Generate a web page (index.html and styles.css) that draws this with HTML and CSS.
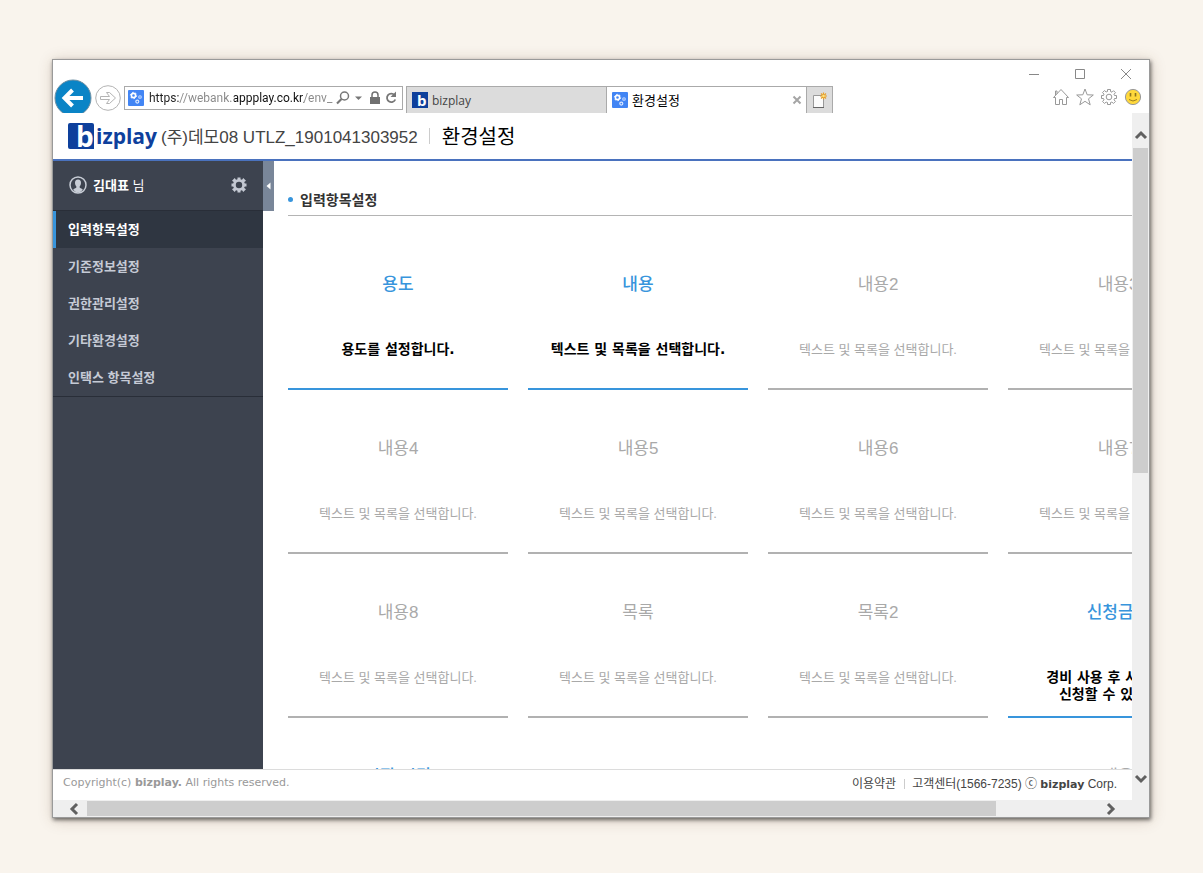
FILE: index.html
```html
<!DOCTYPE html>
<html lang="ko">
<head>
  <meta charset="UTF-8">
  <title>환경설정</title>
  <link rel="stylesheet" href="styles.css">
</head>
<body>

<svg class="defs" width="0" height="0">
  <symbol id="gears" viewBox="0 0 16 16">
    <rect width="16" height="16" rx="1" fill="#4285f4"/>
    <circle cx="5.5" cy="5.5" r="2.1" fill="none" stroke="#fff" stroke-width="1.6"/>
    <circle cx="5.5" cy="5.5" r="3.2" fill="none" stroke="#fff" stroke-width="1" stroke-dasharray="1.4 1.95"/>
    <circle cx="12" cy="7" r="1.3" fill="none" stroke="#c4daff" stroke-width="1.1"/>
    <circle cx="9.3" cy="11.6" r="1.5" fill="none" stroke="#dbe8ff" stroke-width="1.2"/>
  </symbol>
</svg>

<div class="window">

  <div class="chrome">
    <div class="nav">
      <button class="back" aria-label="뒤로">
        <svg width="38" height="38" viewBox="0 0 38 38">
          <circle cx="19" cy="19" r="18" fill="#0a84c6" stroke="#6d8fa3"/>
          <path d="M29 19H11M18.500 11L10.500 19L18.500 27" fill="none" stroke="#fff" stroke-width="4"/>
        </svg>
      </button>
      <button class="forward" aria-label="앞으로">
        <svg width="26" height="26" viewBox="0 0 26 26" fill="none" stroke="#b4b4b4">
          <circle cx="13" cy="13" r="12.300"/>
          <path d="M5.500 11.500H14.500L11.500 7.500H14.500L20.500 13L14.500 18.500H11.500L14.500 14.500H5.500Z"/>
        </svg>
      </button>
      <div class="address">
        <svg width="16" height="16"><use href="#gears"/></svg>
        <input type="text" value="https://webank.appplay.co.kr/env_" aria-label="주소">
        <svg width="66" height="16" viewBox="0 0 66 16">
          <circle cx="8.500" cy="6" r="4" fill="none" stroke="#777" stroke-width="1.500"/>
          <path d="M5.500 9L1 13.500" stroke="#777" stroke-width="2.200"/>
          <path d="M19 6.500H26L22.500 10Z" fill="#777"/>
          <path d="M34 7H44V14H34Z" fill="#707070"/>
          <path d="M36 7.500V5A3 3 0 0 1 42 5V7.500" fill="none" stroke="#707070" stroke-width="1.500"/>
          <path d="M58.500 5A4.300 4.300 0 1 0 59.300 9.500" fill="none" stroke="#777" stroke-width="1.800"/>
          <path d="M60 1.500V7H54.500Z" fill="#777"/>
        </svg>
      </div>
      <div class="tabs">
        <button class="tab">
          <svg width="16" height="16" viewBox="0 0 16 16">
            <rect width="16" height="16" fill="#0e409c"/>
            <text x="5" y="14" class="tab-b">b</text>
          </svg>
          <span>bizplay</span>
        </button>
        <button class="tab current">
          <svg width="16" height="16"><use href="#gears"/></svg>
          <span>환경설정</span>
          <svg class="tab-close" width="8" height="8" viewBox="0 0 8 8"><path d="M0.500 0.500L7.500 7.500M7.500 0.500L0.500 7.500" stroke="#a5a5a5" stroke-width="2"/></svg>
        </button>
        <button class="new-tab" aria-label="새 탭">
          <svg width="16" height="18" viewBox="0 0 16 18">
            <path d="M1.500 4.500H11.500V16.500H1.500Z" fill="#fbfbfb" stroke="#999"/>
            <path d="M1 16.500H12" stroke="#666"/>
            <path d="M11.500 1.500V8.500M8 5H15M9 2.500L14 7.500M14 2.500L9 7.500" stroke="#e8a02a" stroke-width="1.200"/>
            <circle cx="11.500" cy="5" r="1.300" fill="#ffe27a"/>
          </svg>
        </button>
      </div>
    </div>

    <div class="chrome-right">
      <div class="window-buttons">
        <button aria-label="최소화"><svg width="12" height="12" viewBox="0 0 12 12"><path d="M1 6.500H11" stroke="#888"/></svg></button>
        <button aria-label="최대화"><svg width="12" height="12" viewBox="0 0 12 12"><path d="M1.500 1.500H10.500V10.500H1.500Z" fill="none" stroke="#888"/></svg></button>
        <button aria-label="닫기"><svg width="12" height="12" viewBox="0 0 12 12"><path d="M1 1L11 11M11 1L1 11" stroke="#888"/></svg></button>
      </div>
      <div class="tools">
        <button aria-label="홈"><svg width="18" height="18" viewBox="0 0 18 18"><path d="M1.500 9.500L9 1.500L16.500 9.500H14.500V16.500H10.500V11.500H7.500V16.500H3.500V9.500ZM3.500 7.400V3H5V5.800" fill="none" stroke="#999"/></svg></button>
        <button aria-label="즐겨찾기"><svg width="18" height="18" viewBox="0 0 18 18"><path d="M9 1L11.200 6.800L17.300 7L12.500 10.800L14.200 16.800L9 13.300L3.800 16.800L5.500 10.800L0.700 7L6.800 6.800Z" fill="none" stroke="#999"/></svg></button>
        <button aria-label="도구"><svg width="18" height="18" viewBox="0 0 18 18" fill="none" stroke="#999"><circle cx="9" cy="9" r="2.800"/><path d="M7.500 1.500H10.500V3.500L12 4.200L13.500 2.700L15.500 4.700L14 6.200L14.500 7.500H16.500V10.500H14.500L14 11.900L15.500 13.400L13.400 15.500L11.900 14L10.500 14.500V16.500H7.500V14.500L6.100 14L4.600 15.500L2.500 13.400L4 11.900L3.500 10.500H1.500V7.500H3.500L4 6.100L2.500 4.600L4.600 2.500L6.100 4L7.500 3.500Z"/></svg></button>
        <button aria-label="의견 보내기"><svg width="18" height="18" viewBox="0 0 18 18"><circle cx="9" cy="9" r="7.600" fill="#ffd83b" stroke="#999"/><path d="M6.500 5V8.500M11.500 5V8.500" stroke="#8c7420" stroke-width="1.600"/><path d="M5 11.500Q9 14.500 13 11.500" fill="none" stroke="#9b7d1c"/></svg></button>
      </div>
    </div>
  </div>

  <div class="view">
    <div class="page">
      <header>
        <a class="logo" href="#" aria-label="bizplay">
          <svg width="28" height="28" viewBox="0 0 28 28">
            <path d="M2 1H24Q26 1 26 3V27H2Q0 27 0 25V3Q0 1 2 1Z" fill="#0e409c"/>
            <text x="8" y="25" class="logo-b">b</text>
            <path d="M14.500 14L20 17.500L14.500 21Z" fill="#0e409c"/>
          </svg>
          <span>izplay</span>
        </a>
        <span class="company">(주)데모08 UTLZ_1901041303952</span>
        <h1>환경설정</h1>
      </header>

      <div class="body">
        <aside>
          <div class="user">
            <svg width="18" height="18" viewBox="0 0 18 18">
              <circle cx="9" cy="9" r="8" fill="none" stroke="#c8cdd6" stroke-width="1.500"/>
              <path d="M9 3.500C11.200 3.500 12 5 12 6.800C12 8.500 11.300 9.600 10.700 10.300V11.700L13.800 13.300Q12 16.500 9 16.500Q6 16.500 4.200 13.300L7.300 11.700V10.300C6.700 9.600 6 8.500 6 6.800C6 5 6.800 3.500 9 3.500Z" fill="#c8cdd6"/>
            </svg>
            <p><b>김대표</b> 님</p>
            <button class="settings" aria-label="설정">
              <svg width="16" height="16" viewBox="0 0 16 16">
                <circle cx="8" cy="8" r="4.600" fill="none" stroke="#c3c8d2" stroke-width="2.800"/>
                <path d="M6.500 0.500H9.500V3H6.500ZM6.500 13H9.500V15.500H6.500ZM0.500 6.500H3V9.500H0.500ZM13 6.500H15.500V9.500H13ZM1 3.700L3.700 1L5.500 3.400L3.400 5.500ZM12.300 1L15 3.700L12.600 5.500L10.500 3.400ZM1 12.300L3.400 10.500L5.500 12.600L3.700 15ZM12.600 10.500L15 12.300L12.300 15L10.500 12.600Z" fill="#c3c8d2"/>
              </svg>
            </button>
          </div>
          <nav class="menu">
            <a class="active" href="#">입력항목설정</a>
            <a href="#">기준정보설정</a>
            <a href="#">권한관리설정</a>
            <a href="#">기타환경설정</a>
            <a href="#">인택스 항목설정</a>
          </nav>
        </aside>
        <button class="fold" aria-label="메뉴 접기">
          <svg width="5" height="8" viewBox="0 0 5 8"><path d="M4.500 0.500V7.500L0.500 4Z" fill="#fff"/></svg>
        </button>

        <main>
          <h2>입력항목설정</h2>
          <div class="cards">
            <section class="card on"><h3>용도</h3><p>용도를 설정합니다.</p></section>
            <section class="card on"><h3>내용</h3><p>텍스트 및 목록을 선택합니다.</p></section>
            <section class="card"><h3>내용2</h3><p>텍스트 및 목록을 선택합니다.</p></section>
            <section class="card"><h3>내용3</h3><p>텍스트 및 목록을 선택합니다.</p></section>
            <section class="card"><h3>내용4</h3><p>텍스트 및 목록을 선택합니다.</p></section>
            <section class="card"><h3>내용5</h3><p>텍스트 및 목록을 선택합니다.</p></section>
            <section class="card"><h3>내용6</h3><p>텍스트 및 목록을 선택합니다.</p></section>
            <section class="card"><h3>내용7</h3><p>텍스트 및 목록을 선택합니다.</p></section>
            <section class="card"><h3>내용8</h3><p>텍스트 및 목록을 선택합니다.</p></section>
            <section class="card"><h3>목록</h3><p>텍스트 및 목록을 선택합니다.</p></section>
            <section class="card"><h3>목록2</h3><p>텍스트 및 목록을 선택합니다.</p></section>
            <section class="card on"><h3>신청금액</h3><p>경비 사용 후 사용금액을<br>신청할 수 있습니다.</p></section>
            <section class="card on"><h3>시작 시간</h3></section>
            <section class="card last"><h3>내용</h3></section>
          </div>
        </main>
      </div>

      <footer>
        <p class="copyright">Copyright(c) <b>bizplay.</b> All rights reserved.</p>
        <p class="links"><a href="#">이용약관</a><span>고객센터(1566-7235) ⓒ <b>bizplay</b> Corp.</span></p>
      </footer>
    </div>

    <div class="vbar">
      <button aria-label="위로"><svg width="12" height="10" viewBox="0 0 12 10"><path d="M1 8L6 3L11 8" fill="none" stroke="#606060" stroke-width="3"/></svg></button>
      <div class="track"><div class="thumb"></div></div>
      <button aria-label="아래로"><svg width="12" height="10" viewBox="0 0 12 10"><path d="M1 2L6 7L11 2" fill="none" stroke="#606060" stroke-width="3"/></svg></button>
    </div>
    <div class="hbar">
      <button aria-label="왼쪽"><svg width="10" height="12" viewBox="0 0 10 12"><path d="M8 1L3 6L8 11" fill="none" stroke="#606060" stroke-width="3"/></svg></button>
      <div class="track"><div class="thumb"></div></div>
      <button aria-label="오른쪽"><svg width="10" height="12" viewBox="0 0 10 12"><path d="M2 1L7 6L2 11" fill="none" stroke="#606060" stroke-width="3"/></svg></button>
    </div>
  </div>

</div>

</body>
</html>
```

FILE: styles.css
```css
* {
  box-sizing: border-box;
}

body {
  display: flex;
  height: 100vh;
  margin: 0;
  padding: 59px 53px 55px 52px;
  background: #f9f4ed;
  color: #444;
  font-family: "Liberation Sans", "Noto Sans CJK KR", sans-serif;
  font-size: 13px;
}

h1, h2, h3, p {
  margin: 0;
  font-weight: normal;
}

a {
  color: inherit;
  text-decoration: none;
}

button {
  padding: 0;
  border: none;
  background: none;
  font: inherit;
  color: inherit;
}

svg {
  display: block;
  flex: none;
  overflow: visible;
}

.defs {
  position: absolute;
}

.window {
  flex: 1;
  min-width: 0;
  display: flex;
  flex-direction: column;
  background: #fff;
  border: 1px solid #9a9a9a;
  box-shadow: 1px 2px 4px rgba(0, 0, 0, 0.55), 1px 2px 14px rgba(90, 60, 30, 0.22);
}

/* browser frame */

.chrome {
  flex: none;
  display: flex;
  justify-content: space-between;
  height: 53px;
  overflow: hidden;
}

.nav {
  display: flex;
  align-items: flex-start;
  padding-top: 19px;
}

.back {
  margin-left: 1px;
}

.forward {
  margin: 6px 3px 0;
}

.address {
  display: flex;
  align-items: center;
  width: 279px;
  height: 24px;
  margin-top: 7px;
  padding-left: 3px;
  border: 1px solid #aaa;
}

.address input {
  flex: 1;
  min-width: 0;
  margin-left: 5px;
  padding: 0;
  border: none;
  outline: none;
  font: 12px/18px Roboto, sans-serif;
  color: #777;
  background: linear-gradient(90deg, #222 30px, #888 30px, #888 85px, #111 85px, #111 155px, #888 155px);
  background-clip: text;
  -webkit-background-clip: text;
  -webkit-text-fill-color: transparent;
}

.tabs {
  display: flex;
  height: 27px;
  margin: 7px 0 0 3px;
  border: 1px solid #aaa;
  border-bottom: none;
}

.tab {
  display: flex;
  align-items: center;
  gap: 4px;
  width: 199px;
  padding: 0 5px;
  background: #dcdcdc;
  font-family: "Open Sans", "Noto Sans CJK KR", sans-serif;
  font-size: 12px;
}

.tab.current {
  width: 201px;
  border: solid #aaa;
  border-width: 0 1px;
  background: #fff;
  color: #000;
  font-size: 13px;
  line-height: 18px;
}

.tab-close {
  margin-left: auto;
}

.tab-b {
  fill: #fff;
  font: bold 15px "Open Sans", sans-serif;
}

.new-tab {
  display: flex;
  align-items: center;
  justify-content: center;
  width: 25px;
  background: #dcdcdc;
}

.chrome-right {
  display: flex;
  flex-direction: column;
  align-items: flex-end;
}

.window-buttons {
  display: flex;
  height: 28px;
}

.window-buttons button {
  display: flex;
  align-items: center;
  justify-content: center;
  width: 46px;
}

.tools {
  display: flex;
  gap: 6px;
  padding-right: 7px;
}

/* scrollbars */

.view {
  flex: 1;
  min-height: 0;
  display: grid;
  grid-template-columns: 1fr 17px;
  grid-template-rows: 1fr 17px;
  background: #efefef;
}

.vbar, .hbar {
  display: flex;
  min-width: 0;
  min-height: 0;
}

.vbar {
  flex-direction: column;
  padding: 0 1px;
}

.vbar button, .hbar button {
  display: flex;
  align-items: center;
  justify-content: center;
}

.vbar button {
  height: 35px;
  padding-top: 9px;
}

.vbar button:last-child {
  height: 43px;
  padding: 0;
}

.hbar button {
  width: 34px;
  padding-left: 8px;
}

.hbar button:last-child {
  width: 43px;
  padding: 0;
}

.track {
  flex: 1;
}

.thumb {
  background: #cdcdcd;
}

.vbar .thumb {
  height: 53.4%;
}

.hbar {
  padding: 1px 0;
}

.hbar .thumb {
  width: 90.7%;
  height: 100%;
}

/* page */

.page {
  display: flex;
  flex-direction: column;
  min-width: 0;
  min-height: 0;
  background: #fff;
}

header {
  flex: none;
  display: flex;
  align-items: center;
  height: 48px;
  padding-left: 15px;
  border-bottom: 2px solid #4a72be;
}

.logo {
  display: flex;
  align-items: center;
  color: #0e409c;
  font: bold 21px/28px "Open Sans", sans-serif;
}

.logo-b {
  fill: #fff;
  font: bold 28px "Open Sans", sans-serif;
}

.company {
  margin-left: 4px;
  padding-bottom: 2px;
  color: #444;
  font-size: 17px;
}

h1 {
  margin-left: 11px;
  padding: 2px 0 0 13px;
  color: #000;
  font-size: 20px;
  line-height: 24px;
  background: linear-gradient(#ccc, #ccc) 0 50% / 1px 16px no-repeat;
}

.body {
  flex: 1;
  min-height: 0;
  display: flex;
  overflow: hidden;
}

aside {
  flex: none;
  width: 210px;
  background: #3d434f;
  color: #fff;
}

.user {
  display: flex;
  align-items: center;
  gap: 6px;
  height: 49px;
  padding: 0 16px 2px;
}

.settings {
  margin-left: auto;
}

.menu {
  border: solid #292e38;
  border-width: 1px 0;
}

.menu a {
  display: block;
  height: 37px;
  padding-left: 15px;
  line-height: 38px;
  font-weight: bold;
  color: #c5cad5;
}

.menu a.active {
  padding-left: 12px;
  border-left: 3px solid #3895dc;
  background: #2f3641;
  color: #fff;
}

.fold {
  flex: none;
  display: flex;
  align-items: center;
  justify-content: center;
  width: 11px;
  height: 50px;
  background: #798699;
}

main {
  flex: 1;
  min-width: 0;
  padding-left: 14px;
  overflow: hidden;
}

h2 {
  display: flex;
  align-items: center;
  gap: 7px;
  height: 55px;
  padding-top: 22px;
  border-bottom: 1px solid #b4b4b4;
  color: #333;
  font-size: 14px;
  font-weight: bold;
}

h2::before {
  content: "";
  width: 5px;
  height: 5px;
  border-radius: 50%;
  background: #3895dc;
}

.cards {
  display: grid;
  grid-template-columns: repeat(4, 220px);
  grid-auto-rows: 164px;
  column-gap: 20px;
  padding-top: 10px;
}

.card {
  padding-top: 46px;
  border-bottom: 2px solid #b1b1b1;
  color: #a9a9a9;
  text-align: center;
}

.card.last {
  grid-column: 4;
}

.card h3 {
  font-size: 17px;
  line-height: 26px;
}

.card p {
  margin-top: 43px;
  line-height: 17px;
}

.card.on {
  border-color: #3895dc;
}

.card.on h3 {
  color: #3895dc;
  font-weight: 500;
}

.card.on p {
  color: #000;
  font-family: "DejaVu Sans", "Noto Sans CJK KR", sans-serif;
  font-size: 14px;
  font-weight: bold;
}

footer {
  flex: none;
  display: flex;
  justify-content: space-between;
  height: 31px;
  padding: 0 15px 0 10px;
  border-top: 1px solid #dcdcdc;
  font-size: 12px;
  line-height: 26px;
}

footer b {
  font-family: "DejaVu Sans", sans-serif;
  font-size: 11px;
}

.copyright {
  color: #999;
  font-family: "DejaVu Sans", sans-serif;
  font-size: 11px;
}

.links {
  display: flex;
  align-items: center;
  height: 28px;
}

.links span {
  margin-left: 8px;
  padding-left: 8px;
  background: linear-gradient(#ccc, #ccc) 0 50% / 1px 10px no-repeat;
}
```
